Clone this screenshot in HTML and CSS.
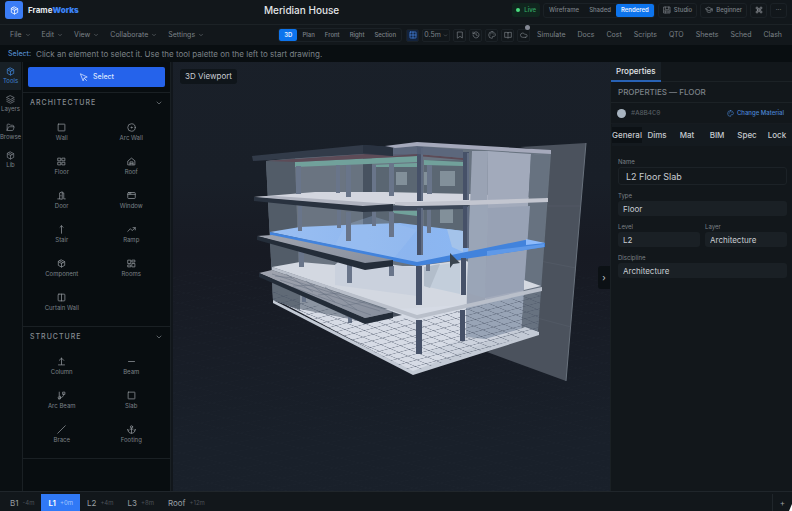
FILE: index.html
```html
<!DOCTYPE html>
<html lang="en">
<head>
<meta charset="utf-8">
<title>FrameWorks</title>
<link rel="stylesheet" href="styles.css">
</head>
<body>
<svg class="sprite" aria-hidden="true">
  <symbol id="box" viewBox="0 0 24 24"><path d="M12 2.500 20.500 7v10L12 21.500 3.500 17V7zM3.500 7l8.500 5 8.500-5M12 12v9.500M7.500 4.800l8.500 4.800"/></symbol>
  <symbol id="down" viewBox="0 0 24 24"><path d="m6 9 6 6 6-6"/></symbol>
  <symbol id="layers" viewBox="0 0 24 24"><path d="m12 2 10 5-10 5L2 7zM2 12l10 5 10-5M2 17l10 5 10-5"/></symbol>
  <symbol id="folder" viewBox="0 0 24 24"><path d="M3 19V5a2 2 0 0 1 2-2h4l3 3h6a2 2 0 0 1 2 2v2M3 19l3-7a2 2 0 0 1 2-2h14l-3 9a2 2 0 0 1-2 1H4a1 1 0 0 1-1-1z"/></symbol>
  <symbol id="pointer" viewBox="0 0 24 24"><path d="m4 3 7 18 2.500-7.500L21 11zM14 14l6 6"/></symbol>
  <symbol id="square" viewBox="0 0 24 24"><rect x="3" y="3" width="18" height="18" rx="1"/></symbol>
  <symbol id="target" viewBox="0 0 24 24"><circle cx="12" cy="12" r="10"/><circle cx="12" cy="12" r="1.500"/></symbol>
  <symbol id="four" viewBox="0 0 24 24"><rect x="3" y="3" width="7" height="7"/><rect x="14" y="3" width="7" height="7"/><rect x="3" y="14" width="7" height="7"/><rect x="14" y="14" width="7" height="7"/></symbol>
  <symbol id="home" viewBox="0 0 24 24"><path d="M3 10 12 3l9 7v11H3zM8 21v-8h8v8M8 17h8"/></symbol>
  <symbol id="door" viewBox="0 0 24 24"><path d="M2 21h5V5l7-3v20l-7-1M14 5h4v16h4M10.500 12v1"/></symbol>
  <symbol id="window" viewBox="0 0 24 24"><rect x="2" y="4" width="20" height="16" rx="2"/><path d="M2 9h20M6 4v4M10 4v4"/></symbol>
  <symbol id="up" viewBox="0 0 24 24"><path d="M12 22V2M8 6l4-4 4 4"/></symbol>
  <symbol id="trend" viewBox="0 0 24 24"><path d="m2 17 7-7 5 5 8-8M16 7h6v6"/></symbol>
  <symbol id="rooms" viewBox="0 0 24 24"><path d="M3 3h7v9H3zM14 3h7v5h-7zM14 12h7v9h-7zM3 16h7v5H3z"/></symbol>
  <symbol id="columns" viewBox="0 0 24 24"><rect x="3" y="3" width="18" height="18" rx="2"/><path d="M12 3v18"/></symbol>
  <symbol id="column" viewBox="0 0 24 24"><path d="M12 20V3M6 9l6-6 6 6M4 21h16"/></symbol>
  <symbol id="minus" viewBox="0 0 24 24"><path d="M4 12h16"/></symbol>
  <symbol id="arc" viewBox="0 0 24 24"><path d="M6 3v13M18 8c0 7-5 10-9 10M9 20c-2 2-6 1-6-2s3-3 5-1M15 8V3h6v5zM9 14v7H4"/></symbol>
  <symbol id="slash" viewBox="0 0 24 24"><path d="M2 22 22 2"/></symbol>
  <symbol id="anchor" viewBox="0 0 24 24"><circle cx="12" cy="5" r="3"/><path d="M12 8v14M2 12c0 6 4 10 10 10s10-4 10-10M2 12l3 3M22 12l-3 3M8 11h8"/></symbol>
  <symbol id="grid" viewBox="0 0 24 24"><rect x="3" y="3" width="18" height="18" rx="1"/><path d="M12 3v18M3 12h18"/></symbol>
  <symbol id="bookmark" viewBox="0 0 24 24"><path d="M5 3h14v18l-7-5-7 5z"/></symbol>
  <symbol id="history" viewBox="0 0 24 24"><path d="M3 12a9 9 0 1 0 3-7L3 8M3 3v5h5M12 7v5l4 2"/></symbol>
  <symbol id="palette" viewBox="0 0 24 24"><path d="M12 2a10 10 0 1 0 0 20c2 0 2-2 1-3s0-3 2-3h3c2 0 4-1 4-4 0-6-5-10-10-10z"/><path d="M7 12v.1M8.500 7.500v.1M13 6v.1M17 9v.1"/></symbol>
  <symbol id="book" viewBox="0 0 24 24"><path d="M12 5v16M12 5C10 4 7 4 2 4v15h7l3 2 3-2h7V4c-5 0-8 0-10 1z"/></symbol>
  <symbol id="cloud" viewBox="0 0 24 24"><path d="M17 19H8a6.500 6.500 0 1 1 6-9h3a4.500 4.500 0 0 1 0 9z"/></symbol>
  <symbol id="studio" viewBox="0 0 24 24"><rect x="3" y="3" width="18" height="18"/><path d="M7 3v8h10V3M3 15h18M8 15v6M14 18h3"/></symbol>
  <symbol id="cap" viewBox="0 0 24 24"><path d="m12 4 10 5-10 5L2 9zM6 11v6c3 3 9 3 12 0v-6M22 9v6"/></symbol>
  <symbol id="command" viewBox="0 0 24 24"><path d="M9 9h6v6H9zM9 9H6a3 3 0 1 1 3-3zM15 9V6a3 3 0 1 1 3 3zM15 15h3a3 3 0 1 1-3 3zM9 15v3a3 3 0 1 1-3-3z"/></symbol>
</svg>

<header class="top">
  <a class="brand" href="#"><span class="mark"><svg class="ic"><use href="#box"/></svg></span><span>Frame<b>Works</b></span></a>
  <h1>Meridian House</h1>
  <div class="top-right">
    <span class="live"><i></i>Live</span>
    <div class="seg modes"><button>Wireframe</button><button>Shaded</button><button class="on">Rendered</button></div>
    <button class="box"><svg class="ic"><use href="#studio"/></svg>Studio</button>
    <button class="box"><svg class="ic"><use href="#cap"/></svg>Beginner</button>
    <button class="box sq" aria-label="Commands"><svg class="ic"><use href="#command"/></svg></button>
    <button class="box sq">···</button>
  </div>
</header>

<nav class="bar">
  <div class="menus">
    <button>File<svg class="ic"><use href="#down"/></svg></button>
    <button>Edit<svg class="ic"><use href="#down"/></svg></button>
    <button>View<svg class="ic"><use href="#down"/></svg></button>
    <button>Collaborate<svg class="ic"><use href="#down"/></svg></button>
    <button>Settings<svg class="ic"><use href="#down"/></svg></button>
  </div>
  <div class="seg views"><button class="on">3D</button><button>Plan</button><button>Front</button><button>Right</button><button>Section</button></div>
  <div class="tools">
    <button class="tool active" aria-label="Grid"><svg class="ic"><use href="#grid"/></svg></button>
    <button class="tool snap">0.5m<svg class="ic"><use href="#down"/></svg></button>
    <button class="tool" aria-label="Bookmarks"><svg class="ic"><use href="#bookmark"/></svg></button>
    <button class="tool" aria-label="History"><svg class="ic"><use href="#history"/></svg></button>
    <button class="tool" aria-label="Palette"><svg class="ic"><use href="#palette"/></svg></button>
    <button class="tool" aria-label="Library"><svg class="ic"><use href="#book"/></svg></button>
    <button class="tool cloud" aria-label="Cloud"><svg class="ic"><use href="#cloud"/></svg><i></i></button>
  </div>
  <div class="links"><a href="#">Simulate</a><a href="#">Docs</a><a href="#">Cost</a><a href="#">Scripts</a><a href="#">QTO</a><a href="#">Sheets</a><a href="#">Sched</a><a href="#">Clash</a></div>
</nav>

<div class="hint"><strong>Select:</strong><span>Click an element to select it. Use the tool palette on the left to start drawing.</span></div>

<main>
  <nav class="rail">
    <button class="on"><svg class="ic"><use href="#box"/></svg>Tools</button>
    <button><svg class="ic"><use href="#layers"/></svg>Layers</button>
    <button><svg class="ic"><use href="#folder"/></svg>Browse</button>
    <button><svg class="ic"><use href="#box"/></svg>Lib</button>
  </nav>

  <aside class="palette">
    <div class="pick"><button><svg class="ic"><use href="#pointer"/></svg>Select</button></div>
    <section>
      <h2>ARCHITECTURE<svg class="ic"><use href="#down"/></svg></h2>
      <div class="items">
        <button><svg class="ic"><use href="#square"/></svg>Wall</button>
        <button><svg class="ic"><use href="#target"/></svg>Arc Wall</button>
        <button><svg class="ic"><use href="#four"/></svg>Floor</button>
        <button><svg class="ic"><use href="#home"/></svg>Roof</button>
        <button><svg class="ic"><use href="#door"/></svg>Door</button>
        <button><svg class="ic"><use href="#window"/></svg>Window</button>
        <button><svg class="ic"><use href="#up"/></svg>Stair</button>
        <button><svg class="ic"><use href="#trend"/></svg>Ramp</button>
        <button><svg class="ic"><use href="#box"/></svg>Component</button>
        <button><svg class="ic"><use href="#rooms"/></svg>Rooms</button>
        <button><svg class="ic"><use href="#columns"/></svg>Curtain Wall</button>
      </div>
    </section>
    <section>
      <h2>STRUCTURE<svg class="ic"><use href="#down"/></svg></h2>
      <div class="items">
        <button><svg class="ic"><use href="#column"/></svg>Column</button>
        <button><svg class="ic"><use href="#minus"/></svg>Beam</button>
        <button><svg class="ic"><use href="#arc"/></svg>Arc Beam</button>
        <button><svg class="ic"><use href="#square"/></svg>Slab</button>
        <button><svg class="ic"><use href="#slash"/></svg>Brace</button>
        <button><svg class="ic"><use href="#anchor"/></svg>Footing</button>
      </div>
    </section>
  </aside>
  <div class="split"></div>

  <div class="viewport">
    <svg class="scene" viewBox="173 62 437 429" preserveAspectRatio="xMidYMid slice" role="img" aria-label="Building model">
      <defs>
        <linearGradient id="sky" x1="0" y1="0" x2="0" y2="1"><stop offset="0" stop-color="#1b222b"/><stop offset=".4" stop-color="#191f28"/><stop offset=".46" stop-color="#171a23"/><stop offset=".62" stop-color="#19202a"/><stop offset="1" stop-color="#1b222c"/></linearGradient>
        <linearGradient id="blue"><stop offset="0" stop-color="#9abff2"/><stop offset=".5" stop-color="#8cb5ef"/><stop offset="1" stop-color="#8abaf8"/></linearGradient>
        <linearGradient id="top" x1="0" y1="0" x2="1" y2="1"><stop offset="0" stop-color="#a0a4af"/><stop offset="1" stop-color="#878f9d"/></linearGradient>
        <pattern id="lines" width="10" height="10" patternUnits="userSpaceOnUse" patternTransform="matrix(.9 .38 1.05 -.28 413 373)"><path d="M0 0H10M0 0V10" fill="none" stroke="#4a5466" stroke-width="1"/></pattern>
        <pattern id="ground" width="10" height="10" patternUnits="userSpaceOnUse" patternTransform="matrix(2 .5 2.6 -.5 413 373)"><path d="M0 0H10M0 0V10" fill="none" stroke="#29313c" stroke-width=".4"/></pattern>
      </defs>
      <rect x="-400" y="-300" width="1600" height="1200" fill="url(#sky)"/>
      <path d="M-400 270H1200V700H-400z" fill="url(#ground)" opacity=".3"/>
      <path d="M520 147 586 143 566 381 487 352 538 332 549 152z" fill="#4b525d"/>
      <path d="M586 143 566 381" stroke="#69727d" fill="none"/>
      <path d="M548 206 580 206M540 261 576 268M537 318 571 327" stroke="#5b636e" stroke-width=".4" fill="none"/>
      <!-- rear walls -->
      <path d="M266 161 417 145 551 153 538 332 413 350 273 300z" fill="#687380"/>
      <path d="M266 161 295 158 300 305 273 300z" fill="#525c68"/>
      <path d="M295 159 345 155V300H300z" fill="#6a7481"/>
      <path d="M363 155 372 154V226H363z" fill="#475260"/>
      <path d="M376 166H417V232H376z" fill="#5a6672"/>
      <path d="M424 160H463V236H424z" fill="#5b6773"/>
      <path d="M396 172h11v13h-11zM440 171h15v15h-15zM440 208h13v15h-13zM424 172h5v13h-5z" fill="#82909a"/>
      <path d="M534 154 543 155V160L534 159z" fill="#7a8593"/>
      <path d="M295 162 417 156V162L295 167zM372 165 417 163V167H372zM424 160 463 162V166L424 165zM393 211 417 211V216L393 213z" fill="#71a19b"/>
      <path d="M267 161 365 154 417 154 463 158V160L417 156 295 162z" fill="#5d4b57"/>
      <!-- upper floor plates -->
      <path d="M254 197 315 192 385 192 470 194 548 198V200L417 203 363 206z" fill="#d3d6df"/>
      <path d="M270 232 300 227 345 225 400 223 463 231 545 243 417 263z" fill="url(#blue)"/>
      <path d="M345 225 372 216 417 230 394 258 335 245z" fill="#a6c6ef" opacity=".25"/>
      <path d="M447 229 463 231V252L452 247z" fill="#a4c3ea"/>
      <!-- lower interior -->
      <path d="M272 267 300 262 335 265 345 255 393 266 417 266 463 260 526 281 541 287 417 316z" fill="#d3d8e1"/>
      <path d="M335 265 345 258 417 268V296L335 285z" fill="#cad1dd"/>
      <path d="M424 267 460 262V294L424 286z" fill="#c3cedb"/>
      <path d="M424 267 440 264 430 288 424 286z" fill="#b2bdca"/>
      <path d="M273 298 300 297 365 310 417 308 538 300 525 327 538 332 413 372z" fill="#d6dbe5"/>
      <path d="M273 276 365 322 300 309 273 300z" fill="#8b94a1"/>
      <path d="M272 274 300 287V310L273 300z" fill="#606a76"/>
      <!-- columns behind the core -->
      <g fill="#69758a">
        <path d="M296 166h5v28h-5zM336 165h4v28h-4zM346 165h5v32h-5zM372 165h4v27h-4zM389 163h5v33h-5zM427 165h5v29h-5z"/>
        <path d="M298 206h4v25h-4zM337 210h4v18h-4zM346 212h5v29h-5zM372 212h4v14h-4zM389 212h5v25h-5zM427 209h4v24h-4z"/>
        <path d="M299 252h5v15h-5zM347 264h5v19h-5zM389 266h5v10h-5zM426 264h4v7h-4zM302 296h4v6h-4zM348 317h4v6h-4z"/>
      </g>
      <!-- core -->
      <path d="M472 151 488 151 485 350 466 341 467 290z" fill="#9aa3b4"/>
      <path d="M488 151 531 154 521 335 485 350z" fill="#a2aabb"/>
      <path d="M531 154 549 155 538 332 521 334z" fill="#677280"/>
      <path d="M470 206 488 205 485 298 467 293z" fill="#9aa5b7"/>
      <path d="M488 208 530 206 524 290 485 298z" fill="#98a2b5"/>
      <path d="M466 308 524 293 521 329 485 339 466 337z" fill="#98a4b6"/>
      <path d="M466 337 485 339 521 329 538 332 470 355 424 354z" fill="#cdd3de"/>
      <!-- slab edges -->
      <path d="M417 202 548 198V202L417 207 395 205V202z" fill="#c3c6d0"/>
      <path d="M363 206 417 206 470 205 463 209 417 210H393z" fill="#3d4859"/>
      <path d="M525 240 545 243V247L417 266 270 235V232L417 262z" fill="#4283dc"/>
      <path d="M487 251 544 244V247L487 256z" fill="#5f99e8"/>
      <path d="M526 239 545 243 526 245z" fill="#8dbafa"/>
      <path d="M272 267 417 315 542 287V291L417 319 272 270z" fill="#b9bfca"/>
      <path d="M524 280 541 286 524 290z" fill="#d5d9e1"/>
      <path d="M273 300 413 371 525 327 539 332V335L413 375 273 303z" fill="#c3cad5"/>
      <path d="M273 290 365 322 393 317 417 320 541 292 538 332 413 372 273 300z" fill="url(#lines)"/>
      <!-- main columns -->
      <path d="M417 147h6v54h-6zM463 152h6v48h-6zM417 208h6v47h-6zM463 206h5v42h-5zM416 266h6v39h-6zM461 258h5v37h-5zM416 320h6v34h-6zM460 310h5v31h-5z" fill="#465168"/>
      <path d="M421 148h2v53h-2zM421 208h2v47h-2zM467 153h2v47h-2zM467 207h2v41h-2z" fill="#606c82"/>
      <!-- overhangs -->
      <path d="M254 197 275 196 393 204 363 207z" fill="#b0b4c0"/>
      <path d="M254 197 363 206 393 204V211L363 212 254 201z" fill="#29323f"/>
      <path d="M257 236 272 235 393 260 365 265z" fill="url(#top)"/>
      <path d="M257 236 365 263 393 260V266L365 270 257 240z" fill="#242d39"/>
      <path d="M259 273 272 270 393 312 365 318z" fill="url(#top)"/>
      <path d="M272 274 393 312M286 274 313 292M306 281 335 302M325 287 357 310M280 280 380 311M292 287 371 315M292 278 275 276M315 285 293 286M340 293 318 295M365 302 342 306" stroke="#667080" stroke-width=".5" fill="none"/>
      <path d="M259 273 365 318 393 312V318L365 324 259 277z" fill="#232c38"/>
      <path d="M393 312 402 315 393 317z" fill="#48515e"/>
      <!-- roof -->
      <path d="M393 148 417 146 463 150V158L417 154 393 156z" fill="#59647a" opacity=".8"/>
      <path d="M252 156 363 145 393 147V156L363 154 253 161z" fill="#323b49"/>
      <path d="M363 145 393 147V156L363 153z" fill="#293240"/>
      <path d="M385 146 417 142 551 150V154L417 146 395 148z" fill="#a5a9bb"/>
      <path d="M450 253 460 263 453 264 450 268z" fill="#39444f"/>
    </svg>
    <span class="tag">3D Viewport</span>
    <button class="fold" aria-label="Collapse">›</button>
  </div>

  <aside class="props">
    <div class="tabs"><button>Properties</button></div>
    <h2>PROPERTIES — FLOOR</h2>
    <div class="material"><i></i><code>#A8B4C0</code><button><svg class="ic"><use href="#palette"/></svg>Change Material</button></div>
    <div class="subtabs"><button class="on">General</button><button>Dims</button><button>Mat</button><button>BIM</button><button>Spec</button><button>Lock</button></div>
    <form>
      <label class="wide big">Name<input value="L2 Floor Slab"></label>
      <label class="wide">Type<input value="Floor" readonly></label>
      <label>Level<input value="L2" readonly></label>
      <label>Layer<input value="Architecture" readonly></label>
      <label class="wide">Discipline<input value="Architecture" readonly></label>
    </form>
  </aside>
</main>

<footer>
  <button>B1<small>-4m</small></button>
  <button class="on">L1<small>+0m</small></button>
  <button>L2<small>+4m</small></button>
  <button>L3<small>+8m</small></button>
  <button>Roof<small>+12m</small></button>
  <button class="add">+</button>
  <i class="corner"></i>
</footer>
</body>
</html>
```
FILE: styles.css
```css
* { box-sizing: border-box; }
body {
  margin: 0;
  height: 100vh;
  display: flex;
  flex-direction: column;
  overflow: hidden;
  background: #12171b;
  color: #7c8288;
  font: 7px/10px Inter, sans-serif;
}
button, input { font: inherit; color: inherit; background: none; border: 0; padding: 0; margin: 0; }
button { display: flex; align-items: center; justify-content: center; white-space: nowrap; }
a { color: inherit; text-decoration: none; }
h1, h2 { margin: 0; }
.sprite { position: absolute; width: 0; height: 0; }
.ic { width: 9px; height: 9px; flex: none; fill: none; stroke: currentColor; stroke-width: 2; stroke-linecap: round; stroke-linejoin: round; }

.top { flex: none; display: flex; align-items: center; height: 24px; padding: 0 5px 4px; }
.brand { display: flex; align-items: center; gap: 5px; color: #e4e8ec; font-size: 8px; font-weight: 700; }
.brand b { color: #3b82f6; }
.mark { display: flex; align-items: center; justify-content: center; width: 18px; height: 18px; border-radius: 3px; background: #3b7df6; color: #fff; }
.top h1 { flex: 1; padding-left: 12px; text-align: center; color: #e2e5e8; font-size: 10px; font-weight: 500; }
.top-right { display: flex; align-items: center; gap: 3px; font-size: 6px; font-weight: 500; }
.live { display: flex; align-items: center; gap: 4px; height: 14px; padding: 0 4px; border-radius: 3px; background: #10261e; color: #34a866; }
.live i { width: 4px; height: 4px; border-radius: 50%; background: #4ade80; }
.seg { display: flex; border: 1px solid #1b2126; border-radius: 3px; font-size: 6px; font-weight: 500; }
.seg button { height: 13px; padding: 0 5px; }
.seg .on { background: #0d74ed; color: #e6efff; border-radius: 2px; font-weight: 600; }
.box { gap: 3px; height: 15px; padding: 0 4px; border: 1px solid #1b2126; border-radius: 3px; }
.box .ic { width: 8px; height: 8px; }
.sq { width: 17px; padding: 0; color: #9a9fa5; }

.bar { flex: none; display: flex; align-items: center; height: 21px; padding: 0 10px; border-top: 1px solid #1c2226; }
.menus { display: flex; gap: 11px; margin-right: auto; }
.menus button { gap: 3px; }
.menus .ic { width: 6px; height: 6px; }
.views { margin-right: 4px; }
.views button { height: 12px; }
.tools { display: flex; gap: 3px; margin-right: 7px; }
.tool { width: 13px; height: 13px; border: 1px solid #1b2126; border-radius: 2px; }
.tool .ic { width: 8px; height: 8px; }
.tool.active { color: #4a8cf0; background: #13233d; }
.tool.snap { width: 28px; gap: 2px; }
.tool.snap .ic { width: 5px; height: 5px; }
.cloud { position: relative; }
.cloud i { position: absolute; top: -5px; right: -1px; width: 5px; height: 5px; border-radius: 50%; background: #858995; }
.links { display: flex; gap: 12px; }

.hint { flex: none; display: flex; align-items: center; gap: 5px; height: 17px; padding: 0 8px; background: #090e11; font-size: 8px; }
.hint strong { color: #5289c8; font-size: 7px; font-weight: 500; }

main { flex: 1; min-height: 0; display: grid; grid-template-columns: 23px 147px 3px 1fr 182px; }
.rail { background: #0a0f12; border-right: 1px solid #1a2024; }
.rail button { flex-direction: column; width: 21px; height: 28px; font-size: 6px; line-height: 8px; gap: 1px; }
.rail .on { background: #182026; color: #3f82d2; }
.palette { background: #080d10; }
.split { background: #11161b; border-left: 1px solid #191f23; }
.pick { padding: 5px; }
.pick button { width: 100%; height: 20px; gap: 5px; border-radius: 2px; background: #2563eb; color: #dbe6ff; font-size: 7px; font-weight: 500; }
.palette section { border-top: 1px solid #1a2024; padding-bottom: 6px; }
.palette section:last-child { border-bottom: 1px solid #1a2024; }
.palette h2 { display: flex; align-items: center; justify-content: space-between; height: 20px; padding: 0 7px; color: #858b90; font-size: 7px; font-weight: 500; letter-spacing: 1px; }
.palette h2 .ic { width: 8px; height: 8px; }
.items { display: grid; grid-template-columns: 1fr 1fr; padding: 3px 4px 0; grid-auto-rows: 34px; font-size: 6px; }
.items button { flex-direction: column; gap: 1px; }
.items .ic { color: #92979c; }

.viewport { position: relative; overflow: hidden; background: #1b222b; }
.scene { position: absolute; inset: 0; width: 100%; height: 100%; }
.tag { position: absolute; left: 7px; top: 7px; padding: 3px 5px; border-radius: 3px; background: #0f151a; color: #c9cdd2; font-size: 8px; line-height: 9px; }
.fold { position: absolute; right: 0; top: 204px; width: 12px; height: 23px; border-radius: 3px 0 0 3px; background: #0c1115; color: #c9cdd2; font-size: 9px; }

.props { border-left: 1px solid #1a2024; }
.tabs { display: flex; height: 20px; border-bottom: 1px solid #1c2226; }
.tabs button { height: 20px; padding: 0 5px; border-bottom: 2px solid #2862b5; background: #192026; color: #e3e6e9; font-size: 8px; font-weight: 500; }
.props h2 { height: 21px; padding-left: 7px; border-bottom: 1px solid #1c2226; font-size: 8px; line-height: 21px; font-weight: 500; }
.material { display: flex; align-items: center; gap: 5px; height: 21px; padding: 0 8px 0 6px; border-bottom: 1px solid #161b20; }
.material i { width: 9px; height: 9px; border-radius: 50%; background: #a8b4c0; }
.material code { font: 7px/10px "Liberation Mono", monospace; color: #5c6268; }
.material button { margin-left: auto; gap: 3px; color: #4a86d4; font-size: 6px; font-weight: 500; }
.material .ic { width: 7px; height: 7px; }
.subtabs { display: grid; grid-template-columns: repeat(6, 1fr); height: 22px; padding: 3px 0; margin-left: 1px; background: #141a1f; }
.subtabs button { color: #c6cacf; font-size: 8px; font-weight: 500; }
.subtabs .on { background: #0c1115; }
form { display: grid; grid-template-columns: 1fr 1fr; gap: 6px 5px; padding: 11px 5px 0 7px; }
label { display: flex; flex-direction: column; font-size: 6px; }
.wide { grid-column: span 2; }
label input { width: 100%; height: 15px; padding: 0 5px; border-radius: 3px; background: #1a2025; color: #c9cdd2; font-size: 8px; }
.big input { height: 18px; padding: 0 7px; border: 1px solid #1c2227; background: #12171b; font-size: 9px; }

footer { position: relative; flex: none; display: flex; height: 20px; padding-top: 2px; border-top: 1px solid #20262b; }
footer button { gap: 4px; padding: 0 7px; color: #9ba0a5; font-size: 8px; }
footer button:first-child { padding-left: 10px; }
footer small { color: #4b5157; font-size: 6px; }
footer .on { background: #3079f6; color: #fff; font-weight: 600; }
footer .on small { color: #a3c6ff; font-weight: 400; }
footer .add { margin-left: auto; width: 20px; padding: 0; border-left: 1px solid #20262b; }
.corner { position: absolute; right: 0; bottom: 0; width: 3px; height: 7px; background: #fff; clip-path: polygon(100% 0, 100% 100%, 0 100%); }
```
